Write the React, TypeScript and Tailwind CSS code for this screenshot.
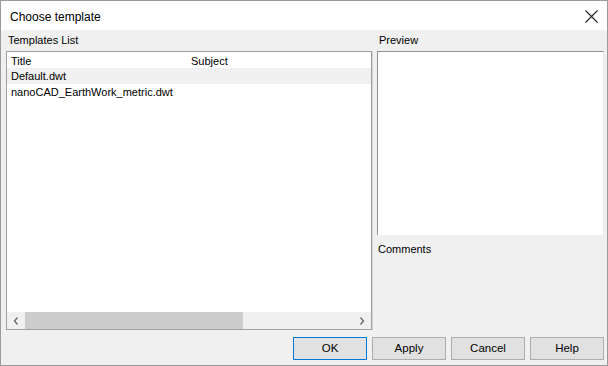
import React from "react";

const font = { fontFamily: '"Segoe UI", "Liberation Sans", Arial, sans-serif' };

function Btn({ label, def }: { label: string; def?: boolean }) {
  return (
    <div
      className={
        "w-[74px] h-[23px] flex items-center justify-center text-[11.5px] text-black bg-[#e1e1e1] border " +
        (def ? "border-[#0078d7]" : "border-[#adadad]")
      }
    >
      {label}
    </div>
  );
}

export default function App() {
  return (
    <div style={font} className="w-[608px] h-[366px] border border-[#9a9a9a] bg-[#f0f0f0] flex flex-col text-black overflow-hidden">
      <div className="h-[29px] bg-white flex items-center justify-between pl-[9px] pr-[9px] pt-[2px] shrink-0">
        <span className="text-[12px] leading-none">Choose template</span>
        <svg width="13" height="13" viewBox="0 0 13 13">
          <path d="M0.5 0.5 L12.5 12.5 M12.5 0.5 L0.5 12.5" stroke="#222" strokeWidth="1.1" fill="none" />
        </svg>
      </div>
      <div className="flex flex-1 min-h-0">
        <div className="w-[371px] pl-[5px] flex flex-col shrink-0">
          <div className="h-[21px] flex items-center pl-[2px] text-[11px]">Templates List</div>
          <div className="h-[279px] border border-[#a0a0a0] bg-white flex flex-col text-[11px]">
            <div className="h-[16px] flex items-center pt-[3px]">
              <span className="w-[184px] pl-[4px]">Title</span>
              <span>Subject</span>
            </div>
            <div className="h-[16px] flex items-center bg-[#f0f0f0] pl-[4px] pt-[1px]">Default.dwt</div>
            <div className="h-[16px] flex items-center pl-[4px]">nanoCAD_EarthWork_metric.dwt</div>
            <div className="flex-1" />
            <div className="h-[17px] bg-[#f0f0f0] flex items-center">
              <div className="w-[18px] flex items-center justify-center">
                <svg width="6" height="8" viewBox="0 0 6 8">
                  <path d="M4.5 0.5 L1.5 4 L4.5 7.5" stroke="#606060" strokeWidth="1.2" fill="none" />
                </svg>
              </div>
              <div className="w-[218px] h-[17px] bg-[#cdcdcd]" />
              <div className="flex-1" />
              <div className="w-[18px] flex items-center justify-center">
                <svg width="6" height="8" viewBox="0 0 6 8">
                  <path d="M1.5 0.5 L4.5 4 L1.5 7.5" stroke="#606060" strokeWidth="1.2" fill="none" />
                </svg>
              </div>
            </div>
          </div>
        </div>
        <div className="flex-1 flex flex-col">
          <div className="h-[21px] flex items-center pl-[7px] text-[11px]">Preview</div>
          <div className="h-[279px] border-l border-[#d4d4d4] flex flex-col pl-[4px] pr-[3px]">
            <div className="h-[184px] bg-white border-t border-l border-[#909090] border-r border-r-[#e8e8e8]" />
            <div className="h-[27px] flex items-center text-[11px] pl-[1px] pt-[2px]">Comments</div>
          </div>
        </div>
      </div>
      <div className="h-[34px] flex items-start justify-end gap-[5px] pr-[3px] pt-[6px] shrink-0">
        <Btn label="OK" def />
        <Btn label="Apply" />
        <Btn label="Cancel" />
        <Btn label="Help" />
      </div>
    </div>
  );
}
